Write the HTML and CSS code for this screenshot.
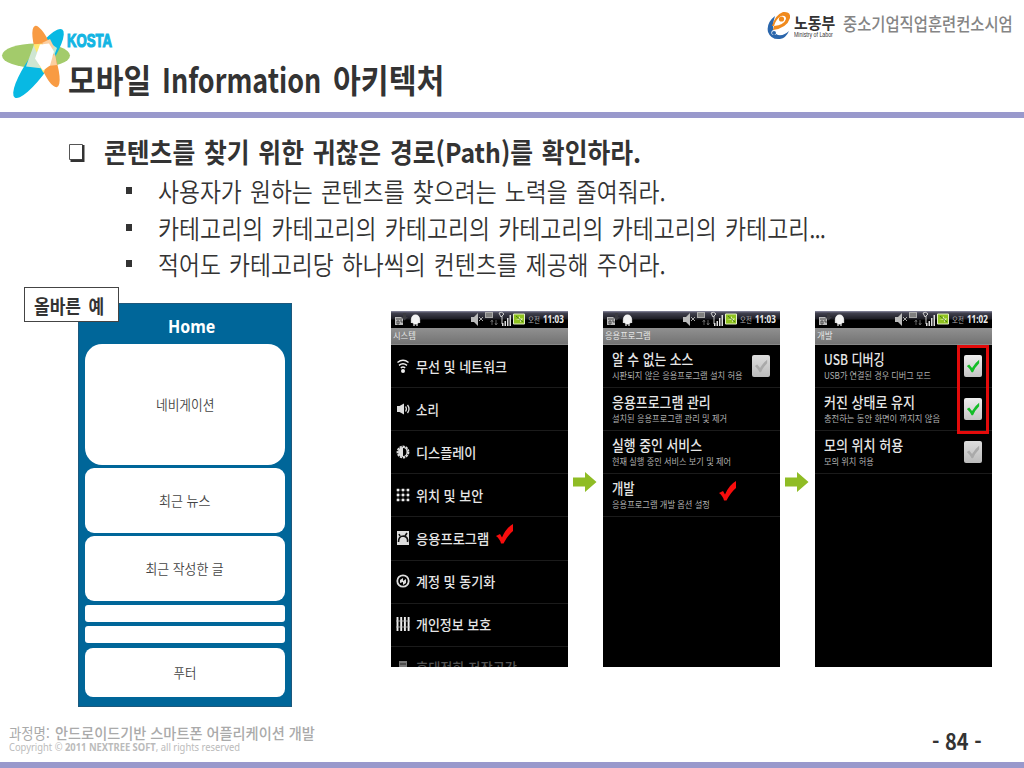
FILE: index.html
```html
<!DOCTYPE html>
<html lang="ko">
<head>
<meta charset="utf-8">
<title>모바일 Information 아키텍처</title>
<link rel="stylesheet" href="styles.css">
</head>
<body>
<svg class="defs" aria-hidden="true">
  <symbol id="statusicons" viewBox="0 0 177 17">
    <path d="M4 6h8v8H4z" fill="#bbb"/><path d="M5 8h6M6 10h2v3H6zM9 10h2v2" stroke="#333" fill="none" stroke-width=".8"/>
    <path d="M12 2h3v4h2l-3.500 3.500L10 6h2z" fill="#3a3a40"/>
    <ellipse cx="24.500" cy="8.500" rx="4.500" ry="5" fill="#f4f4f4"/><path d="M20.500 8v4M28.500 8v4M23 13v2M26 13v2" stroke="#ddd" stroke-width="1.300"/>
    <path d="M80 6h3l4-4v13l-4-4h-3z" fill="#bbb"/><path d="M88 6l4 4M92 6l-4 4" stroke="#aaa" stroke-width="1"/>
    <path d="M94 1h8v6h-8z" fill="#aaa"/><path d="M95 3h6M95 5h6" stroke="#555"/>
    <path d="M101 9v5M99.500 11l1.500-2 1 2M105 9v5M104 12l1 2 1.500-2" stroke="#777" fill="none" stroke-width=".8"/>
    <path d="M108 2q3-2 5 1l-3 3zM111 5v8" stroke="#ccc" fill="none"/>
    <path d="M111 12h1.500v3H111zM113.500 10h1.500v5h-1.500zM116 7h1.500v8H116zM118.500 4h1.500v11h-1.500z" fill="#ddd"/>
    <path d="M122.500 3h11v10h-11z" fill="#8fc31f" stroke="#e4efc8"/><path d="M124 8h3l2-3v2.500h3l-3 4V9z" fill="#e6f7b5"/><path d="M125 5l7 6" stroke="#487b16"/>
  </symbol>
  <symbol id="redcheck" viewBox="0 0 18 21">
    <path d="M0 12l4-2 2 3.500Q10 4 17 0v7q-5 4-9.500 12.500H5Q4 15 0 12z" fill="#f80d0d"/>
  </symbol>
  <symbol id="tick" viewBox="0 0 19 22">
    <path d="M3 11l2.500-1.500L8.500 13q3-5 7.500-8.500v3.500q-4.500 4.500-6.500 9.500H8Q6 13.500 3 11z" fill="currentColor"/>
  </symbol>
  <symbol id="arrow" viewBox="0 0 24 20">
    <path d="M0 5.500h12V0l11.500 10L12 20v-5.500H0z" fill="#8fbc25"/>
  </symbol>
</svg>

<div class="slide">
  <header class="header">
    <svg class="star" viewBox="0 0 68 74">
      <ellipse cx="34" cy="29.600" rx="34" ry="12" fill="#a3cb6b"/>
      <ellipse rx="10.500" ry="41.500" transform="translate(36.500 37.500) rotate(35)" fill="#08b9e3"/>
      <ellipse rx="8.500" ry="32.500" transform="translate(44 30.500) rotate(-20)" fill="#f89b43"/>
      <path d="M32 18.500h8l-6 14 7 10-17-2z" fill="#cfe6d2"/>
      <path d="M31.500 18.500l9-1-6 9z" fill="#ffe96f"/>
      <path d="M36.500 38l8 2-3 7z" fill="#ffe96f"/>
      <path d="M48 17l7 5-3 8z" fill="#c5e6cf"/>
      <path d="M40 17l8-4 4 8-3 5z" fill="#fbcfa0"/>
      <path d="M46 40l9-1-2-11-5 4z" fill="#fbcfa0"/>
      <path d="M38 18.500l9-1 5 8-4 14-7 5-8-12z" fill="#fff"/>
    </svg>
    <div class="titles">
      <div class="kosta"><span class="fit" data-w="45">KOSTA</span></div>
      <h1 class="title"><span class="fit" data-w="83">모바일</span><span class="fit" data-w="159">Information</span><span class="fit" data-w="111">아키텍처</span></h1>
    </div>
    <div class="agency">
      <svg class="ministry-mark" viewBox="0 0 24 30">
        <path d="M8 5Q-1 12 1 21q3 8 12 7 6-1 9-8-5 5-11 4-8-4-3-19z" fill="#2a66ac"/>
        <path d="M5 15Q8 4 16 1q8-1 7 6-3 10-17 12l1-4q10-1 12-7 0-4-5-3-5 3-7 10z" fill="#f08a1d"/>
        <circle cx="14.500" cy="8" r="2.600" fill="#f08a1d"/><circle cx="7" cy="21.500" r="2.600" fill="#fff"/><circle cx="7" cy="22" r="2" fill="#2a66ac"/>
      </svg>
      <div class="ministry">
        <div class="ministry-ko"><span class="fit" data-w="41">노동부</span></div>
        <div class="ministry-en"><span class="fit" data-w="39">Ministry of Labor</span></div>
      </div>
      <div class="consortium"><span class="fit" data-w="170">중소기업직업훈련컨소시엄</span></div>
    </div>
  </header>

  <main class="content">
    <h2 class="lead"><svg class="box" viewBox="0 0 16 19"><path d="M.5.5h13v15H.5z" fill="#fff" stroke="#555"/><path d="M13 1v14.500H1.500V18H15.500V1z" fill="#333"/></svg><span class="fit" data-w="537">콘텐츠를 찾기 위한 귀찮은 경로(Path)를 확인하라.</span></h2>
    <ul class="points">
      <li><span class="fit" data-w="508">사용자가 원하는 콘텐츠를 찾으려는 노력을 줄여줘라.</span></li>
      <li><span class="fit" data-w="667">카테고리의 카테고리의 카테고리의 카테고리의 카테고리의 카테고리<span class="dots">...</span></span></li>
      <li><span class="fit" data-w="508">적어도 카테고리당 하나씩의 컨텐츠를 제공해 주어라.</span></li>
    </ul>

    <div class="figures">
      <section class="wire">
        <div class="tag"><span class="fit" data-w="70">올바른 예</span></div>
        <div class="wire-title"><span class="fit" data-w="47">Home</span></div>
        <div class="block nav"><span class="fit" data-w="58">네비게이션</span></div>
        <div class="block news"><span class="fit" data-w="51">최근 뉴스</span></div>
        <div class="block posts"><span class="fit" data-w="78">최근 작성한 글</span></div>
        <div class="block thin"></div>
        <div class="block thin second"></div>
        <div class="block foot"><span class="fit" data-w="23">푸터</span></div>
      </section>

      <section class="phone">
        <div class="status"><svg class="sicons"><use href="#statusicons"/></svg><span class="ampm"><span class="fit" data-w="12">오전</span></span><b><span class="fit" data-w="21">11:03</span></b></div>
        <div class="bar"><span class="fit" data-w="23">시스템</span></div>
        <div class="row menu"><svg viewBox="0 0 14 14"><path d="M1.500 3.500q5.500-4.500 11 0M3 6.300q4-3 8 0M4.800 8.800q2.200-1.500 4.400 0" fill="none" stroke="#eee" stroke-width="1.500"/><circle cx="7" cy="12" r="2" fill="#eee"/></svg><span class="fit" data-w="91">무선 및 네트워크</span></div>
        <div class="row menu"><svg viewBox="0 0 14 14"><path d="M1 4h2.500L8 1.500v11L3.500 10H1z" fill="#ddd"/><path d="M9.500 4.500q1.800 2.500 0 5M11.500 3q3 4 0 8" fill="none" stroke="#ddd" stroke-width="1.300"/></svg><span class="fit" data-w="23">소리</span></div>
        <div class="row menu"><svg viewBox="0 0 14 14"><circle cx="7" cy="7" r="5.500" fill="none" stroke="#ddd" stroke-width="1.800" stroke-dasharray="2.300 .8"/><circle cx="7" cy="7" r="5" fill="#ddd"/><path d="M7 3q3.500 0 3.500 4T7 11z" fill="#000"/></svg><span class="fit" data-w="60">디스플레이</span></div>
        <div class="row menu"><svg viewBox="0 0 14 14"><path d="M1 2h12M1 7h12M1 12h12M2 1v12M7 1v12M12 1v12" stroke="#777" stroke-width=".6"/><path d="M.7 2h13M.7 7h13M.7 12h13" stroke="#eee" stroke-width="2.600" stroke-dasharray="2.600 2.400"/></svg><span class="fit" data-w="67">위치 및 보안</span></div>
        <div class="row menu"><svg viewBox="0 0 14 14"><path d="M1 0h12v14H1z" fill="#ddd"/><path d="M2.500 11q0-6 5-6 5 1 4 6M4 5L3 3M9 5l2-3" fill="none" stroke="#111" stroke-width="1.600"/></svg><span class="fit" data-w="73">응용프로그램</span><svg class="mark"><use href="#redcheck"/></svg></div>
        <div class="row menu"><svg viewBox="0 0 14 14"><circle cx="7" cy="7" r="5.700" fill="none" stroke="#ddd" stroke-width="1.800"/><path d="M4 9V6l3-2v3l3-2v4l-3 2V8z" fill="#ddd"/></svg><span class="fit" data-w="79">계정 및 동기화</span></div>
        <div class="row menu"><svg viewBox="0 0 14 14"><path d="M1.500 0v14M5.200 0v14M8.900 0v14M12.600 0v14" stroke="#eee" stroke-width="1.900"/><path d="M0 4h14M0 10h14" stroke="#bbb" stroke-width=".8"/></svg><span class="fit" data-w="75">개인정보 보호</span></div>
        <div class="row menu dim"><svg viewBox="0 0 14 14"><path d="M3 1h8v13H3z" fill="#aaa"/><path d="M4 4h6" stroke="#333"/></svg><span class="fit" data-w="101">휴대전화 저장공간</span></div>
      </section>

      <svg class="arrow"><use href="#arrow"/></svg>

      <section class="phone">
        <div class="status"><svg class="sicons"><use href="#statusicons"/></svg><span class="ampm"><span class="fit" data-w="12">오전</span></span><b><span class="fit" data-w="21">11:03</span></b></div>
        <div class="bar"><span class="fit" data-w="46">응용프로그램</span></div>
        <div class="row"><div class="name"><span class="fit" data-w="81">알 수 없는 소스</span></div><div class="desc"><span class="fit" data-w="131">시판되지 않은 응용프로그램 설치 허용</span></div><svg class="check off"><use href="#tick"/></svg></div>
        <div class="row"><div class="name"><span class="fit" data-w="99">응용프로그램 관리</span></div><div class="desc"><span class="fit" data-w="115">설치된 응용프로그램 관리 및 제거</span></div></div>
        <div class="row"><div class="name"><span class="fit" data-w="90">실행 중인 서비스</span></div><div class="desc"><span class="fit" data-w="119">현재 실행 중인 서비스 보기 및 제어</span></div></div>
        <div class="row"><div class="name"><span class="fit" data-w="23">개발</span></div><div class="desc"><span class="fit" data-w="98">응용프로그램 개발 옵션 설정</span></div><svg class="mark dev"><use href="#redcheck"/></svg></div>
      </section>

      <svg class="arrow"><use href="#arrow"/></svg>

      <section class="phone">
        <div class="status"><svg class="sicons"><use href="#statusicons"/></svg><span class="ampm"><span class="fit" data-w="12">오전</span></span><b><span class="fit" data-w="21">11:02</span></b></div>
        <div class="bar"><span class="fit" data-w="16">개발</span></div>
        <div class="row"><div class="name"><span class="fit" data-w="61">USB 디버깅</span></div><div class="desc"><span class="fit" data-w="107">USB가 연결된 경우 디버그 모드</span></div><svg class="check on"><use href="#tick"/></svg></div>
        <div class="row"><div class="name"><span class="fit" data-w="91">커진 상태로 유지</span></div><div class="desc"><span class="fit" data-w="116">충전하는 동안 화면이 꺼지지 않음</span></div><svg class="check on"><use href="#tick"/></svg></div>
        <div class="row"><div class="name"><span class="fit" data-w="79">모의 위치 허용</span></div><div class="desc"><span class="fit" data-w="50">모의 위치 허용</span></div><svg class="check off"><use href="#tick"/></svg></div>
        <div class="highlight"></div>
      </section>
    </div>
  </main>

  <footer class="footer">
    <div>
      <div class="course"><span class="fit light" data-w="41">과정명:</span><span class="fit" data-w="260">안드로이드기반 스마트폰 어플리케이션 개발</span></div>
      <div class="copy"><span class="fit" data-w="231">Copyright © <b>2011 NEXTREE SOFT</b>, all rights reserved</span></div>
    </div>
    <div class="page"><span class="fit" data-w="50">- 84 -</span></div>
  </footer>
</div>
<script src="fit.js"></script>
</body>
</html>
```
FILE: styles.css
```css
* { box-sizing: border-box; }
body {
  margin: 0;
  font-family: "Noto Sans CJK KR", "Noto Sans", sans-serif;
  color: #333;
  background: #fff;
}
.defs { position: absolute; width: 0; height: 0; }
h1, h2, ul { margin: 0; padding: 0; font-weight: inherit; }
svg { display: block; flex: none; }
.fit { display: inline-block; flex: none; white-space: nowrap; transform-origin: 0 50%; }

.slide { width: 1024px; height: 768px; display: flex; flex-direction: column; overflow: hidden; border-bottom: 6px solid #99c; }

/* header */
.header { height: 118px; border-bottom: 6px solid #99c; display: flex; flex: none; }
.star { width: 68px; height: 74px; margin: 26px 0 0 2px; overflow: visible; }
.titles { flex: 1; margin-left: -3px; padding-top: 29px; }
.kosta { height: 23px; font: 700 19px/23px "Liberation Sans", sans-serif; color: #13b5e3; -webkit-text-stroke: 1.200px #13b5e3; }
.title { display: flex; gap: 11px; height: 50px; line-height: 54px; padding-left: 1px; font-size: 33px; font-weight: 700; }
.agency { display: flex; padding: 11px 11px 0 0; }
.ministry-mark { width: 24px; height: 30px; margin-right: 3px; }
.ministry { width: 49px; padding-top: 3px; }
.ministry-ko { height: 17px; font-size: 16px; line-height: 17px; font-weight: 700; }
.ministry-en { font: 7px/8px "Liberation Sans", sans-serif; }
.consortium { font-size: 18px; line-height: 25px; color: #858585; font-weight: 500; }

/* text */
.content { flex: 1; min-height: 0; }
.lead { display: flex; height: 56px; padding: 14px 0 0 69px; font-size: 27px; line-height: 40px; font-weight: 700; word-spacing: 2px; }
.box { width: 16px; height: 19px; margin: 12px 19px 0 0; }
.points { list-style: none; padding-left: 126px; }
.points li { display: flex; height: 36.7px; font-size: 26px; line-height: 34px; word-spacing: 2px; font-weight: 350; }
.points li::before { content: ""; width: 6px; height: 7px; margin: 13px 26px 0 0; background: #333; }
.dots { letter-spacing: -1px; }

/* figures */
.figures { display: flex; padding: 19px 0 0 78px; }
.wire { position: relative; width: 214px; height: 404px; padding: 0 6px; background: #069; border: 1px solid #1d587c; }
.tag { position: absolute; left: -55px; top: -17px; width: 95px; height: 35px; padding-left: 9px; border: 1.500px solid #444; background: #fff; font-size: 19px; line-height: 35px; font-weight: 700; word-spacing: 3px; }
.wire-title { display: flex; height: 40px; padding-left: 83px; color: #fff; font: 700 18px/45px "Noto Sans", sans-serif; }
.block { display: flex; align-items: center; justify-content: center; padding-bottom: 2px; background: #fff; border-radius: 9px; font-size: 14px; color: #444; font-weight: 350; }
.nav { height: 121px; border-radius: 17px; }
.news { height: 65px; margin-top: 3px; }
.posts { height: 65px; margin-top: 3px; }
.thin { height: 17px; margin-top: 4px; border-radius: 3px; }
.second { margin-top: 4px; }
.foot { height: 49px; margin-top: 5px; border-radius: 8px; }
.block .fit { transform-origin: 50% 50%; }

.phone { position: relative; width: 177px; height: 356px; margin-top: 8px; background: #000; color: #e6e6e6; overflow: hidden; }
.wire + .phone { margin-left: 99px; }
.status { position: relative; display: flex; height: 17px; background: linear-gradient(#8e8ea6 0, #41414f 2px, #1d1d25 8px, #000 9px); line-height: 18px; }
.sicons { position: absolute; inset: 0; width: 177px; height: 17px; }
.ampm { position: relative; width: 15px; margin-left: 137px; font-size: 8px; color: #aaa; }
.status b { font: 700 10px/17px "Noto Sans", sans-serif; color: #eee; }
.bar { height: 17px; padding-left: 2px; background: linear-gradient(#909090, #737373); border-bottom: 1px solid #888; font-size: 9px; line-height: 16px; }
.row { position: relative; height: 43.100px; padding: 3px 0 0 9px; border-bottom: 1px solid #1b1b1b; }
.menu { display: flex; align-items: center; padding: 0 0 1px 5px; font-size: 14px; font-weight: 500; }
.menu > svg:first-child { width: 14px; height: 14px; margin-right: 6px; }
.dim { color: #777; opacity: .7; }
.name { height: 21px; font-size: 15px; line-height: 21px; font-weight: 500; }
.desc { font-size: 9px; line-height: 14px; color: #b0b0b0; }
.mark { position: absolute; left: 105px; top: 7px; width: 18px; height: 21px; }
.mark.dev { left: 116px; top: 7px; }
.check { position: absolute; left: 149px; top: 10px; width: 18px; height: 22px; border-radius: 2px; background: linear-gradient(#eee, #c5c5c5); }
.on { color: #14bd27; }
.off { color: #aaa; background: linear-gradient(#ddd, #bbb); }
.highlight { position: absolute; left: 142px; top: 34px; width: 32px; height: 89px; border: 3px solid #e30b0b; }
.arrow { width: 24px; height: 20px; margin: 169px 6px 0 5px; }

/* footer */
.footer { display: flex; justify-content: space-between; flex: none; height: 38px; padding: 0 42px 0 9px; }
.course { display: flex; gap: 5px; height: 18px; font-size: 15px; line-height: 18px; color: #aaa; font-weight: 500; }
.light { font-weight: 400; }
.copy { font: 10px/11px "Noto Sans", sans-serif; color: #bbb; }
.page { font: 600 22px/33px "Noto Sans CJK KR", "Noto Sans", sans-serif; }
```
FILE: fit.js
```js
// Condenses each label horizontally so that it occupies the width in data-w.
document.querySelectorAll('.fit').forEach(function (el) {
  var natural = el.offsetWidth;
  var target = Number(el.dataset.w);
  el.style.transform = 'scaleX(' + target / natural + ')';
  if (getComputedStyle(el.parentNode).justifyContent !== 'center') {
    el.style.marginRight = (target - natural) + 'px';
  }
});
```
